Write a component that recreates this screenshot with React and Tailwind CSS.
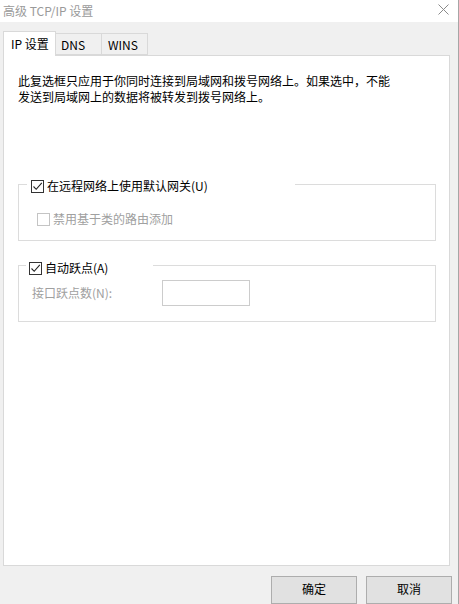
import React from 'react';

const font = { fontFamily: '"Noto Sans CJK SC", "Noto Sans", sans-serif' };

const CheckBox = ({ checked, disabled }) => (
  <span
    className={`flex h-[13px] w-[13px] shrink-0 items-center justify-center border bg-white ${
      disabled ? 'border-[#c4c4c4]' : 'border-[#333333]'
    }`}
  >
    {checked && (
      <svg width="11" height="11" viewBox="0 0 11 11">
        <path d="M1.5 5.5 L4.2 8.3 L9.8 1.8" fill="none" stroke="#222" strokeWidth="1.1" />
      </svg>
    )}
  </span>
);

export default function App() {
  return (
    <div
      className="flex h-[604px] w-[459px] flex-col overflow-hidden border-r border-[#a6a6a6] bg-[#f0f0f0] text-[12px] leading-[16px] text-black"
      style={font}
    >
      {/* title bar */}
      <div className="flex h-[22px] shrink-0 items-center justify-between bg-white pl-[3px] pr-[9px]">
        <span className="text-[#9a9a9a]">高级 TCP/IP 设置</span>
        <svg width="11" height="11" viewBox="0 0 11 11" className="mb-[3px]">
          <path d="M0.5 0.5 L10.5 10.5 M10.5 0.5 L0.5 10.5" stroke="#8a8a8a" strokeWidth="1" />
        </svg>
      </div>

      <div className="flex flex-col pl-[3px] pr-[8px] pt-[9px]">
        {/* tabs */}
        <div className="relative z-10 -mb-px flex h-[25px] items-start">
          <div className="h-[25px] w-[53px] border border-b-0 border-[#d9d9d9] bg-white pl-[7px] pt-[4px]">
            IP 设置
          </div>
          <div className="mt-[2px] h-[22px] w-[46px] border border-l-0 border-[#d9d9d9] bg-[#f0f0f0] pl-[5px] pt-[3px]">
            DNS
          </div>
          <div className="mt-[2px] h-[22px] w-[46px] border border-l-0 border-[#d9d9d9] bg-[#f0f0f0] pl-[6px] pt-[3px]">
            WINS
          </div>
        </div>

        {/* panel */}
        <div className="h-[511px] border border-[#d9d9d9] bg-white pl-[14px] pr-[13px] pt-[17px]">
          <p>
            此复选框只应用于你同时连接到局域网和拨号网络上。如果选中，不能
            <br />
            发送到局域网上的数据将被转发到拨号网络上。
          </p>

          <div className="relative mt-[79px] h-[57px] border border-[#dcdcdc]">
            <div className="absolute left-[8px] top-[-6px] flex h-[14px] w-[268px] items-center gap-[3px] bg-white pl-[4px]">
              <CheckBox checked />
              <span>在远程网络上使用默认网关(U)</span>
            </div>
            <div className="ml-[18px] mt-[26px] flex items-center gap-[3px] text-[#a0a0a0]">
              <CheckBox disabled />
              <span>禁用基于类的路由添加</span>
            </div>
          </div>

          <div className="relative mt-[24px] h-[57px] border border-[#dcdcdc]">
            <div className="absolute left-[7px] top-[-5px] flex h-[14px] w-[127px] items-center gap-[3px] bg-white pl-[3px]">
              <CheckBox checked />
              <span>自动跃点(A)</span>
            </div>
            <div className="ml-[13px] mt-[14px] flex items-center">
              <span className="w-[130px] text-[#a0a0a0]">接口跃点数(N):</span>
              <div className="h-[26px] w-[88px] border border-[#cccccc] bg-white" />
            </div>
          </div>
        </div>

        {/* buttons */}
        <div className="-mr-[2px] mt-[10px] flex justify-end gap-[9px]">
          <button className="h-[28px] w-[86px] border border-[#adadad] bg-[#e1e1e1] pb-[2px]">确定</button>
          <button className="h-[28px] w-[86px] border border-[#adadad] bg-[#e1e1e1] pb-[2px]">取消</button>
        </div>
      </div>
    </div>
  );
}
